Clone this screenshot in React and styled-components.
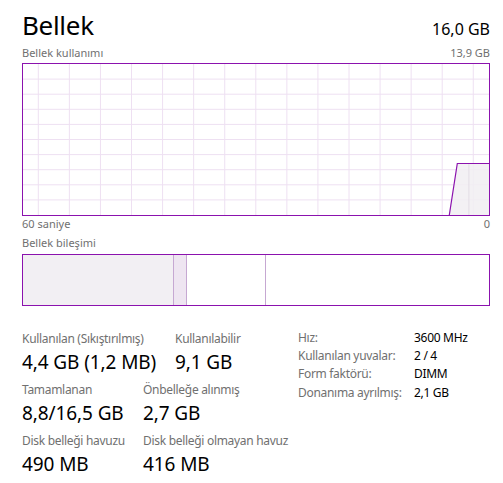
import React from 'react';
import styled, { createGlobalStyle } from 'styled-components';

const GlobalStyle = createGlobalStyle`
	body {
		margin: 0;
		background: #ffffff;
		font-family: "Noto Sans", "Open Sans", sans-serif;
	}
`;

const PURPLE = '#8b12ae';

const Page = styled.div`
	width: 503px;
	height: 483px;
	box-sizing: border-box;
	padding: 9px 13px 0 22px;
	overflow: hidden;
`;

const Header = styled.div`
	display: flex;
	justify-content: space-between;
	align-items: baseline;
	height: 32px;
`;

const Title = styled.div`
	font-size: 26px;
	line-height: 32px;
	letter-spacing: -0.3px;
	color: #000;
`;

const Total = styled.div`
	font-size: 16px;
	color: #000;
`;

const SmallRow = styled.div`
	display: flex;
	justify-content: space-between;
	font-size: 11px;
	line-height: 14px;
	color: #707070;
	margin-top: ${p => p.$mt || 0}px;
`;

const Graph = styled.div`
	margin-top: 3px;
	height: 151px;
	border: 1px solid ${PURPLE};
	svg {
		display: block;
	}
`;

const CompBar = styled.div`
	margin-top: 4px;
	height: 50px;
	border: 1px solid ${PURPLE};
	display: flex;
`;

const Segment = styled.div`
	flex: ${p => (p.$w ? `0 0 ${p.$w}px` : '1')};
	background: ${p => p.$bg || '#fff'};
	border-right: ${p => (p.$w ? '1px solid #c6a8d2' : 'none')};
`;

const Stats = styled.div`
	margin-top: 23px;
	display: flex;
	align-items: flex-start;
`;

const LeftCol = styled.div`
	width: 276px;
	padding-top: 2px;
`;

const StatRow = styled.div`
	display: flex;
	margin-bottom: 8px;
`;

const Stat = styled.div`
	flex: 0 0 ${p => p.$w}px;
`;

const Label = styled.div`
	font-size: 12px;
	line-height: 16px;
	letter-spacing: -0.3px;
	color: #707070;
	white-space: nowrap;
`;

const Value = styled.div`
	margin-top: 3px;
	font-size: 19px;
	line-height: 24px;
	letter-spacing: -0.1px;
	color: #000;
	white-space: nowrap;
`;

const Info = styled.div`
	display: grid;
	grid-template-columns: 116px auto;
	font-size: 12px;
	line-height: 18.2px;
	letter-spacing: -0.3px;
`;

const InfoKey = styled.div`
	color: #707070;
	white-space: nowrap;
`;

const InfoVal = styled.div`
	color: #000;
`;

const stats = [
	[
		{ label: 'Kullanılan (Sıkıştırılmış)', value: '4,4 GB (1,2 MB)', w: 153 },
		{ label: 'Kullanılabilir', value: '9,1 GB', w: 100 },
	],
	[
		{ label: 'Tamamlanan', value: '8,8/16,5 GB', w: 121 },
		{ label: 'Önbelleğe alınmış', value: '2,7 GB', w: 140 },
	],
	[
		{ label: 'Disk belleği havuzu', value: '490 MB', w: 121 },
		{ label: 'Disk belleği olmayan havuz', value: '416 MB', w: 150 },
	],
];

const info = [
	['Hız:', '3600 MHz'],
	['Kullanılan yuvalar:', '2 / 4'],
	['Form faktörü:', 'DIMM'],
	['Donanıma ayrılmış:', '2,1 GB'],
];

function UsageGraph() {
	const W = 466;
	const H = 151;
	const vx = [];
	for (let x = 15.3; x < W; x += 31.07) vx.push(x);
	const hy = [];
	for (let i = 1; i < 10; i++) hy.push(i * 15.1);
	return (
		<svg width={W} height={H}>
			{vx.map(x => (
				<line key={'v' + x} x1={x} y1={0} x2={x} y2={H} stroke="#eee0f2" strokeWidth="1" />
			))}
			{hy.map(y => (
				<line key={'h' + y} x1={0} y1={y} x2={W} y2={y} stroke="#eee0f2" strokeWidth="1" />
			))}
			<polygon points={`426.3,${H} 434.3,99.3 ${W},99.3 ${W},${H}`} fill="#f1eef2" fillOpacity="0.85" />
			<line x1={445.9} y1={99.3} x2={445.9} y2={H} stroke="#e3dde5" strokeWidth="1" />
			<polyline points={`426.3,${H} 434.3,99.5 ${W},99.5`} fill="none" stroke={PURPLE} strokeWidth="1.2" />
		</svg>
	);
}

export default function App() {
	return (
		<Page>
			<GlobalStyle />
			<Header>
				<Title>Bellek</Title>
				<Total>16,0 GB</Total>
			</Header>
			<SmallRow $mt={5}>
				<span>Bellek kullanımı</span>
				<span>13,9 GB</span>
			</SmallRow>
			<Graph>
				<UsageGraph />
			</Graph>
			<SmallRow $mt={1}>
				<span>60 saniye</span>
				<span>0</span>
			</SmallRow>
			<SmallRow $mt={5}>
				<span>Bellek bileşimi</span>
			</SmallRow>
			<CompBar>
				<Segment $w={150} $bg="#f2eff3" />
				<Segment $w={12} $bg="#eee5f1" />
				<Segment $w={78} />
				<Segment />
			</CompBar>
			<Stats>
				<LeftCol>
					{stats.map((row, i) => (
						<StatRow key={i}>
							{row.map(s => (
								<Stat key={s.label} $w={s.w}>
									<Label>{s.label}</Label>
									<Value>{s.value}</Value>
								</Stat>
							))}
						</StatRow>
					))}
				</LeftCol>
				<Info>
					{info.map(([k, v]) => (
						<React.Fragment key={k}>
							<InfoKey>{k}</InfoKey>
							<InfoVal>{v}</InfoVal>
						</React.Fragment>
					))}
				</Info>
			</Stats>
		</Page>
	);
}
